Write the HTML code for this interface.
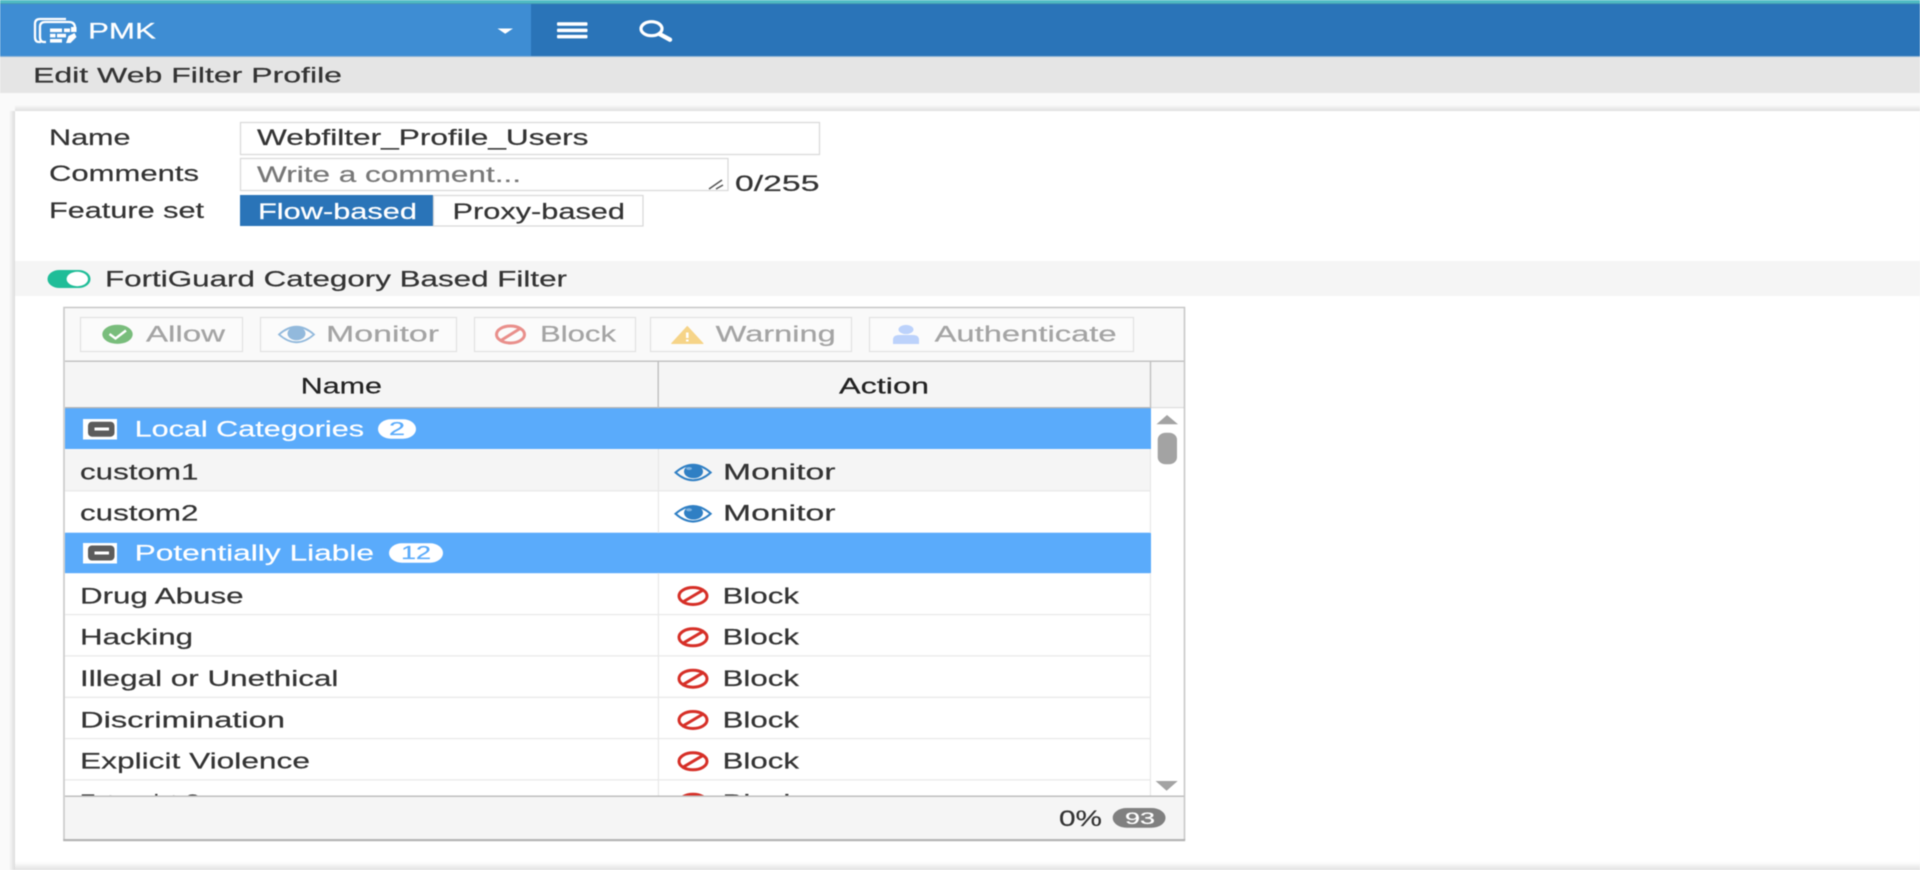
<!DOCTYPE html>
<html>
<head>
<meta charset="utf-8">
<title>Edit Web Filter Profile</title>
<style>
html,body{margin:0;padding:0;width:1920px;height:870px;overflow:hidden;background:#fafafa}
svg{display:block;position:absolute;left:0;top:0;filter:blur(.45px)}
text{font-family:"Liberation Sans",sans-serif;font-size:22px;fill:#333;stroke:#333;stroke-width:.2px;white-space:pre}
.w{fill:#fff;stroke:#fff}.dim{fill:#a4a4a4;stroke:#a4a4a4}.g{fill:#777;stroke:#777}.d{fill:#222;stroke:#222}
.b{fill:#5aabfb;stroke:#5aabfb;font-size:18px}
.e{font-size:21px}
</style>
</head>
<body>
<svg width="1920" height="870" viewBox="0 0 1920 870" xmlns="http://www.w3.org/2000/svg">
<defs>
<linearGradient id="bs" x1="0" y1="0" x2="0" y2="1"><stop offset="0" stop-color="#fff"/><stop offset="1" stop-color="#e2e2e2"/></linearGradient>
<linearGradient id="ts" x1="0" y1="0" x2="0" y2="1"><stop offset="0" stop-color="#fafafa"/><stop offset="1" stop-color="#dfdfdf"/></linearGradient>
<linearGradient id="ls" x1="0" y1="0" x2="1" y2="0"><stop offset="0" stop-color="#fafafa"/><stop offset="1" stop-color="#dcdcdc"/></linearGradient>
<clipPath id="tb"><rect x="65" y="408" width="1086" height="388"/></clipPath>
</defs>

<!-- top bar -->
<rect width="1920" height="3" fill="#50bcc4"/>
<rect y="3" width="1920" height="1.2" fill="#479fb2"/>
<rect y="4" width="1920" height="52.5" fill="#2a74b8"/>
<rect y="4" width="531" height="52.5" fill="#3e8dd3"/>
<rect y="56" width="1920" height="1" fill="#8fb4d6"/>

<!-- logo -->
<g fill="none" stroke="#fff" stroke-width="2.3">
<path d="M41 42 H39 Q35 42 35 37 V24 Q35 19 40 19 H66"/>
<path d="M46 42 H44 Q40 42 40 37 V27 Q40 22 45 22 H69 Q75 22 75 28"/>
</g>
<g fill="#fff">
<rect x="50" y="28.5" width="12" height="3.6"/><rect x="64" y="28.5" width="6" height="3.6"/><rect x="71" y="27" width="5.5" height="5"/>
<rect x="50" y="33.8" width="5.5" height="3.6"/><rect x="57" y="33.8" width="9" height="3.6"/>
<rect x="50" y="39" width="12" height="3.6"/>
<path d="M66 43 l2.5-7 6-3 2 4-6 6z"/>
</g>
<text class="w" x="88" y="38.5" textLength="68" lengthAdjust="spacingAndGlyphs">PMK</text>
<path d="M497.5 28.5 H513 L505.2 33.8 Z" fill="#fff"/>
<g fill="#fff">
<rect x="557" y="22.3" width="30.5" height="3.5" rx="1"/>
<rect x="557" y="28.6" width="30.5" height="3.5" rx="1"/>
<rect x="557" y="34.9" width="30.5" height="3.5" rx="1"/>
</g>
<ellipse cx="651.5" cy="28.7" rx="10.5" ry="7" fill="none" stroke="#fff" stroke-width="3.2"/>
<path d="M659.5 34 L670 39.7" stroke="#fff" stroke-width="4.4" stroke-linecap="round"/>

<!-- sub header -->
<rect y="57" width="1920" height="36" fill="#e5e5e5"/>
<text class="e" x="33" y="82.5" textLength="309" lengthAdjust="spacingAndGlyphs">Edit Web Filter Profile</text>

<!-- panel shadows -->
<rect x="15" y="105" width="1905" height="6" fill="url(#ts)"/>
<rect x="9" y="111" width="6" height="759" fill="url(#ls)"/>
<rect x="15" y="111" width="1905" height="759" fill="#fff"/>
<rect x="15" y="862" width="1905" height="8" fill="url(#bs)"/>

<!-- form -->
<text x="49" y="145" textLength="81.5" lengthAdjust="spacingAndGlyphs">Name</text>
<text x="49" y="181" textLength="150" lengthAdjust="spacingAndGlyphs">Comments</text>
<text x="49" y="218" textLength="155" lengthAdjust="spacingAndGlyphs">Feature set</text>

<rect x="240.5" y="122.5" width="579" height="32" fill="#fff" stroke="#d8d8d8" stroke-width="1.2"/>
<text x="257" y="145" textLength="331.5" lengthAdjust="spacingAndGlyphs">Webfilter_Profile_Users</text>

<rect x="240.5" y="158.5" width="487.5" height="32" fill="#fff" stroke="#d8d8d8" stroke-width="1.2"/>
<text class="g" x="257" y="182" textLength="264" lengthAdjust="spacingAndGlyphs">Write a comment...</text>
<path d="M709 189 L722 180 M716 189 L723 185" stroke="#555" stroke-width="1.5" fill="none"/>
<text x="735" y="191" textLength="84.5" lengthAdjust="spacingAndGlyphs">0/255</text>

<rect x="240" y="195" width="193" height="31" fill="#2a74b8"/>
<text class="w" x="258" y="219" textLength="159" lengthAdjust="spacingAndGlyphs">Flow-based</text>
<rect x="433.5" y="195.5" width="209.5" height="30.5" fill="#fff" stroke="#d8d8d8" stroke-width="1.2"/>
<text x="452.5" y="219" textLength="172.5" lengthAdjust="spacingAndGlyphs">Proxy-based</text>

<!-- section bar -->
<rect x="15" y="261" width="1905" height="35" fill="#f5f5f5"/>
<rect x="47.5" y="270" width="43" height="18" rx="12" ry="9" fill="#1fbd98"/>
<ellipse cx="77.3" cy="279" rx="10.7" ry="7.2" fill="#fff"/>
<text x="105" y="286.5" textLength="462" lengthAdjust="spacingAndGlyphs">FortiGuard Category Based Filter</text>

<!-- table box -->
<rect x="64" y="307.5" width="1120.5" height="533" fill="#fff"/>
<rect x="65" y="308" width="1119" height="53" fill="#f9f9f9"/>

<!-- toolbar -->
<g fill="#fbfbfb" stroke="#e2e2e2" stroke-width="1.2">
<rect x="80.5" y="317.5" width="162" height="34"/>
<rect x="260.5" y="317.5" width="196" height="34"/>
<rect x="474.5" y="317.5" width="161" height="34"/>
<rect x="650.5" y="317.5" width="201" height="34"/>
<rect x="869.5" y="317.5" width="264" height="34"/>
</g>
<ellipse cx="117.5" cy="334.3" rx="15.2" ry="9.6" fill="#79bd7c"/>
<path d="M109.5 334 L115.5 338.5 L126 330.5" stroke="#fff" stroke-width="2.4" fill="none"/>
<text class="dim" x="146" y="341.7" textLength="79" lengthAdjust="spacingAndGlyphs">Allow</text>

<path d="M279 334.5 Q296.5 319 314 334.5 Q296.5 350 279 334.5 Z" fill="none" stroke="#92b9dc" stroke-width="1.8"/>
<ellipse cx="296.5" cy="333.5" rx="9" ry="6.8" fill="#92b9dc"/>
<text class="dim" x="326" y="341.7" textLength="113" lengthAdjust="spacingAndGlyphs">Monitor</text>

<ellipse cx="510.5" cy="334.5" rx="14" ry="8.5" fill="none" stroke="#e98f8b" stroke-width="3"/>
<path d="M500 341 L521 328" stroke="#e98f8b" stroke-width="3"/>
<text class="dim" x="540" y="341.7" textLength="76" lengthAdjust="spacingAndGlyphs">Block</text>

<path d="M671.7 343.5 L687.3 326.5 L703 343.5 Z" fill="#f6d488" stroke="#f6d488" stroke-linejoin="round"/>
<rect x="686" y="332.5" width="2.6" height="5.5" fill="#fff"/><rect x="686" y="339.5" width="2.6" height="2" fill="#fff"/>
<text class="dim" x="715.7" y="341.7" textLength="120" lengthAdjust="spacingAndGlyphs">Warning</text>

<ellipse cx="906" cy="329.5" rx="7.5" ry="4.6" fill="#bcd2fb"/>
<path d="M893 344 V340 Q893 335 899 335 H913 Q919 335 919 340 V344 Z" fill="#bcd2fb"/>
<text class="dim" x="934.6" y="341.7" textLength="182" lengthAdjust="spacingAndGlyphs">Authenticate</text>

<!-- table head -->
<rect x="65" y="361" width="1119" height="47" fill="#f5f5f5"/>
<rect x="65" y="360.5" width="1119" height="1.4" fill="#c0c0c0"/>
<rect x="65" y="407" width="1086" height="1.6" fill="#b5b5b5"/>
<rect x="1151" y="407" width="33" height="1.2" fill="#ddd"/>
<rect x="657.5" y="361" width="1.4" height="47" fill="#c0c0c0"/>
<rect x="1149.8" y="361" width="1.4" height="47" fill="#c0c0c0"/>
<text class="d" x="300.7" y="393.3" textLength="81.3" lengthAdjust="spacingAndGlyphs">Name</text>
<text class="d" x="839" y="393.3" textLength="90" lengthAdjust="spacingAndGlyphs">Action</text>

<!-- table body -->
<g clip-path="url(#tb)">
<rect x="65" y="449.5" width="1085" height="41" fill="#f5f5f5"/>
<rect x="65" y="408.3" width="1086" height="40.7" fill="#5aabfb"/>
<rect x="65" y="532.7" width="1086" height="40.5" fill="#5aabfb"/>

<g fill="#e8e8e8">
<rect x="65" y="490.2" width="1085" height="1.2"/>
<rect x="65" y="614" width="1085" height="1.2"/>
<rect x="65" y="655.3" width="1085" height="1.2"/>
<rect x="65" y="696.7" width="1085" height="1.2"/>
<rect x="65" y="738" width="1085" height="1.2"/>
<rect x="65" y="779.3" width="1085" height="1.2"/>
<rect x="657.8" y="449" width="1.2" height="84"/>
<rect x="657.8" y="573" width="1.2" height="225"/>
<rect x="1149.8" y="449" width="1.2" height="84"/>
<rect x="1149.8" y="573" width="1.2" height="225"/>
</g>

<!-- group 1 -->
<rect x="83" y="419" width="34" height="20.5" fill="#fff"/>
<rect x="88" y="421.7" width="26.5" height="15" rx="4" fill="#5c5c5c"/>
<rect x="94.5" y="427.5" width="14.5" height="3" fill="#fff"/>
<text class="w" x="134.6" y="436.7" textLength="229.4" lengthAdjust="spacingAndGlyphs">Local Categories</text>
<rect x="378" y="419.3" width="38" height="19.4" rx="13" ry="9.7" fill="#fff"/>
<text class="b" x="389" y="435" textLength="16" lengthAdjust="spacingAndGlyphs">2</text>

<!-- custom -->
<text x="80" y="479.3" textLength="118.5" lengthAdjust="spacingAndGlyphs">custom1</text>
<text x="723" y="479.3" textLength="112.5" lengthAdjust="spacingAndGlyphs">Monitor</text>
<path d="M675.5 472.5 Q693 457 710.7 472.5 Q693 488 675.5 472.5 Z" fill="none" stroke="#2f7fc4" stroke-width="2"/>
<ellipse cx="693.5" cy="471.5" rx="9.5" ry="6.8" fill="#2f7fc4"/>
<ellipse cx="689" cy="468.5" rx="3" ry="1.5" fill="#7fb3e0"/>

<text x="80" y="520.3" textLength="118.5" lengthAdjust="spacingAndGlyphs">custom2</text>
<text x="723" y="520.3" textLength="112.5" lengthAdjust="spacingAndGlyphs">Monitor</text>
<path d="M675.5 513.8 Q693 498.3 710.7 513.8 Q693 529.3 675.5 513.8 Z" fill="none" stroke="#2f7fc4" stroke-width="2"/>
<ellipse cx="693.5" cy="512.8" rx="9.5" ry="6.8" fill="#2f7fc4"/>
<ellipse cx="689" cy="509.8" rx="3" ry="1.5" fill="#7fb3e0"/>

<!-- group 2 -->
<rect x="83" y="543" width="34" height="20.5" fill="#fff"/>
<rect x="88" y="545.5" width="26.5" height="15" rx="4" fill="#5c5c5c"/>
<rect x="94.5" y="551.5" width="14.5" height="3" fill="#fff"/>
<text class="w" x="134.6" y="560.7" textLength="239.4" lengthAdjust="spacingAndGlyphs">Potentially Liable</text>
<rect x="389" y="543.3" width="54" height="19.4" rx="13" ry="9.7" fill="#fff"/>
<text class="b" x="401" y="559" textLength="30" lengthAdjust="spacingAndGlyphs">12</text>

<!-- rows -->
<text x="80" y="603.3" textLength="163.5" lengthAdjust="spacingAndGlyphs">Drug Abuse</text>
<text x="80" y="644.6" textLength="113" lengthAdjust="spacingAndGlyphs">Hacking</text>
<text x="80" y="686" textLength="258.4" lengthAdjust="spacingAndGlyphs">Illegal or Unethical</text>
<text x="80" y="727.3" textLength="205" lengthAdjust="spacingAndGlyphs">Discrimination</text>
<text x="80" y="768.6" textLength="230" lengthAdjust="spacingAndGlyphs">Explicit Violence</text>
<text x="80" y="810" textLength="180" lengthAdjust="spacingAndGlyphs">Extremist Groups</text>

<g fill="none" stroke="#d62f27" stroke-width="3">
<ellipse cx="693" cy="596" rx="14" ry="8.5"/><path d="M682 602.5 L704 589.5"/>
<ellipse cx="693" cy="637.3" rx="14" ry="8.5"/><path d="M682 643.8 L704 630.8"/>
<ellipse cx="693" cy="678.7" rx="14" ry="8.5"/><path d="M682 685.2 L704 672.2"/>
<ellipse cx="693" cy="720" rx="14" ry="8.5"/><path d="M682 726.5 L704 713.5"/>
<ellipse cx="693" cy="761.3" rx="14" ry="8.5"/><path d="M682 767.8 L704 754.8"/>
<ellipse cx="693" cy="802.7" rx="14" ry="8.5"/><path d="M682 809.2 L704 796.2"/>
</g>
<text x="722.5" y="603.3" textLength="76.5" lengthAdjust="spacingAndGlyphs">Block</text>
<text x="722.5" y="644.6" textLength="76.5" lengthAdjust="spacingAndGlyphs">Block</text>
<text x="722.5" y="686" textLength="76.5" lengthAdjust="spacingAndGlyphs">Block</text>
<text x="722.5" y="727.3" textLength="76.5" lengthAdjust="spacingAndGlyphs">Block</text>
<text x="722.5" y="768.6" textLength="76.5" lengthAdjust="spacingAndGlyphs">Block</text>
<text x="722.5" y="810" textLength="76.5" lengthAdjust="spacingAndGlyphs">Block</text>
</g>

<!-- scrollbar -->
<path d="M1156.5 424.3 L1167 415 L1178 424.3 Z" fill="#a3a3a3"/>
<rect x="1157.7" y="432.7" width="19.3" height="31.6" rx="8" ry="7" fill="#a3a3a3"/>
<path d="M1155.6 781 H1177.7 L1166.6 790.7 Z" fill="#a3a3a3"/>

<!-- footer -->
<rect x="65" y="796.5" width="1119" height="43" fill="#f5f5f5"/>
<rect x="65" y="795.5" width="1119" height="1.4" fill="#bbb"/>
<text x="1059" y="826" textLength="43" lengthAdjust="spacingAndGlyphs">0%</text>
<rect x="1112.7" y="808" width="52.8" height="19.7" rx="14" ry="9.8" fill="#808080"/>
<text class="w" x="1125" y="824" textLength="30" lengthAdjust="spacingAndGlyphs" style="font-size:17px">93</text>

<!-- box border -->
<path d="M64 840 V307.5 H1184.5 V840" fill="none" stroke="#c8c8c8" stroke-width="1.6"/>
<rect x="63.2" y="839" width="1122" height="2.2" fill="#b4b4b4"/>
</svg>
</body>
</html>
